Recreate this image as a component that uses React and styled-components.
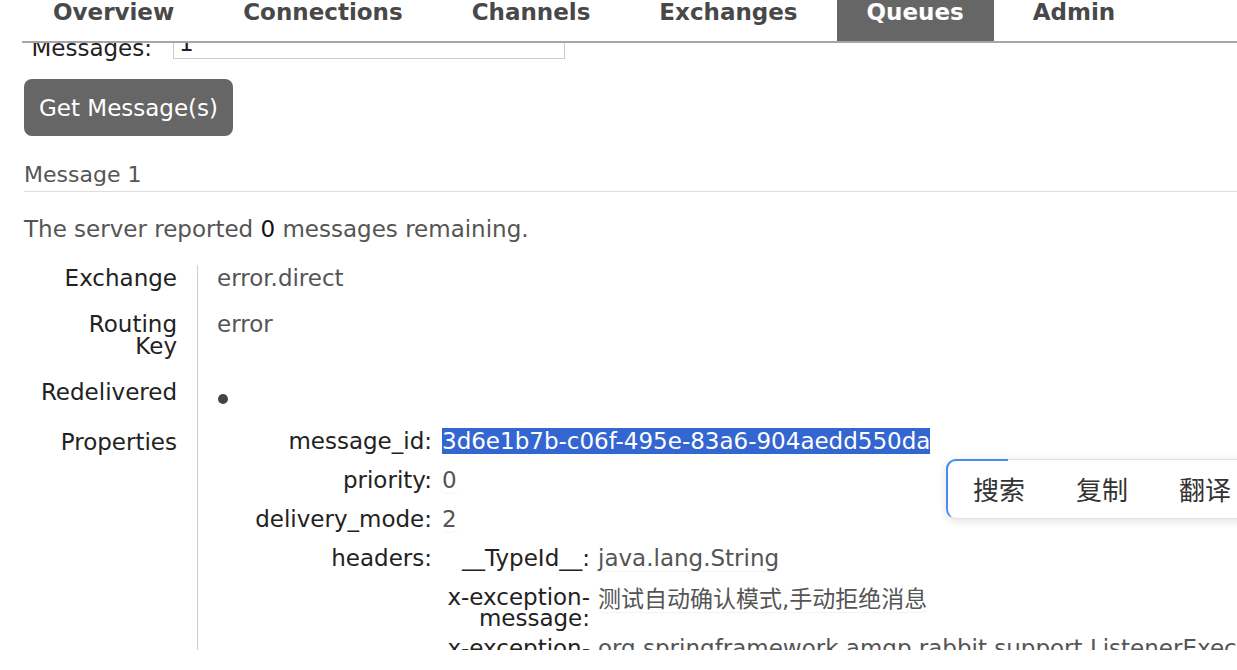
import React from "react";
import styled, {createGlobalStyle} from "styled-components";

const GlobalStyle = createGlobalStyle`
    html, body {
        margin: 0;
        padding: 0;
        background: #FFFFFF;
        overflow: hidden;
    }
    body {
        font-family: "DejaVu Sans", Verdana, "Noto Sans CJK SC", sans-serif;
        font-size: 23px;
        color: #484848;
    }
`;

const Page = styled.div`
    position: relative;
    width: 1237px;
    height: 670px;
    overflow: hidden;
    background: #FFFFFF;
`;

const Nav = styled.ul`
    display: flex;
    height: 41px;
    margin: 0 0 0 22px;
    padding: 0 0 0 1px;
    list-style: none;
    border-bottom: 2px solid #A6A6A6;
`;

const Tab = styled.li`
    padding: 0 30px;
    margin-right: 9px;
    font-weight: bold;
    font-size: 23px;
    line-height: 25px;
    color: ${p => p.$active ? "#FFFFFF" : "#484848"};
    background: ${p => p.$active ? "#666666" : "transparent"};
`;

// viewport of the scrolled page, it stops 20px above the bottom edge
const Main = styled.main`
    height: 607px;
    padding-left: 24px;
    overflow: hidden;
`;

// the page is scrolled, so this row sits partly under the nav
const FormRow = styled.div`
    display: flex;
    align-items: flex-start;
    height: 32px;
    margin-top: -16px;
`;

const FormLabel = styled.label`
    width: 128px;
    padding-top: 8px;
    line-height: 27px;
    text-align: right;
    color: #222222;
`;

const TextInput = styled.input`
    box-sizing: border-box;
    width: 392px;
    height: 32px;
    margin-left: 21px;
    padding: 0 5px;
    border: 1px solid #CCCCCC;
    font: inherit;
    color: #222222;
`;

const GetButton = styled.button`
    display: block;
    height: 57px;
    margin-top: 20px;
    padding: 0 15px;
    border: none;
    border-radius: 8px;
    background: #666666;
    color: #FFFFFF;
    font: inherit;
    font-size: 23px;
`;

const SectionTitle = styled.h2`
    margin: 25px 0 0;
    padding-bottom: 3px;
    font-size: 22px;
    font-weight: normal;
    line-height: 27px;
    color: #555555;
    border-bottom: 1px solid #DDDDDD;
`;

const Summary = styled.p`
    margin: 24px 0 0;
    line-height: 27px;
    color: #555555;

    b {
        font-weight: normal;
        color: #111111;
    }
`;

const DetailTable = styled.table`
    margin-top: 22px;
    border-collapse: collapse;
    border-spacing: 0;
`;

const DetailKey = styled.th`
    width: 137px;
    min-width: 137px;
    padding: 2px 20px 22px 16px;
    border-right: 1px solid #CCCCCC;
    text-align: right;
    vertical-align: top;
    font-weight: normal;
    line-height: 22px;
    color: #222222;
`;

const DetailValue = styled.td`
    padding: 2px 0 22px 19px;
    vertical-align: top;
    line-height: 22px;
    color: #555555;
`;

const Dot = styled.span`
    display: inline-block;
    width: 10px;
    height: 10px;
    margin: 13px 0 0 1px;
    border-radius: 50%;
    background: #444444;
`;

const PropTable = styled.table`
    border-collapse: collapse;
    border-spacing: 0;
`;

const PropKey = styled.th`
    width: ${p => p.$width}px;
    min-width: ${p => p.$width}px;
    padding: 0 ${p => p.$gap}px ${p => p.$rowGap}px 0;
    text-align: right;
    vertical-align: top;
    font-weight: normal;
    line-height: 21px;
    color: #222222;
`;

const PropValue = styled.td`
    padding: 0 0 ${p => p.$rowGap}px 0;
    vertical-align: top;
    line-height: 21px;
    color: #555555;
`;

// long values run off the right edge without widening the tables
const Overflowing = styled.div`
    width: 1px;
    white-space: nowrap;
`;

const ValueBox = styled.span`
    border-radius: 5px;
    box-shadow: 0 1px 1px rgba(0, 0, 0, 0.05);
`;

const Selected = styled.span`
    background: #3366D0;
    color: #FFFFFF;
`;

const Cjk = styled.span`
    font-family: "Noto Sans CJK SC", sans-serif;
`;

const SelectionMenu = styled.div`
    position: absolute;
    top: 459px;
    left: 946px;
    display: flex;
    gap: 51px;
    width: 340px;
    height: 60px;
    box-sizing: border-box;
    padding-left: 25px;
    align-items: center;
    background: #FFFFFF;
    border: 1px solid #E2E2E2;
    border-left: 2px solid #4A8CF5;
    border-radius: 10px;
    box-shadow: 0 2px 10px rgba(0, 0, 0, 0.12);

    &::before {
        content: "";
        position: absolute;
        top: -1px;
        left: -2px;
        width: 60px;
        height: 28px;
        border-top: 2px solid #4A8CF5;
        border-left: 2px solid #4A8CF5;
        border-top-left-radius: 10px;
    }
`;

const MenuItem = styled.span`
    font-family: "Noto Sans CJK SC", sans-serif;
    font-size: 26px;
    line-height: 30px;
    color: #333333;
`;

const tabs = ["Overview", "Connections", "Channels", "Exchanges", "Queues", "Admin"];

const Headers = () => (
    <PropTable>
        <tbody>
        <tr>
            <PropKey $width={148} $gap={8} $rowGap={18}>__TypeId__:</PropKey>
            <PropValue $rowGap={18}><ValueBox>java.lang.String</ValueBox></PropValue>
        </tr>
        <tr>
            <PropKey $width={148} $gap={8} $rowGap={9}>x-exception-message:</PropKey>
            <PropValue $rowGap={9}><ValueBox><Cjk>测试自动确认模式</Cjk>,<Cjk>手动拒绝消息</Cjk></ValueBox></PropValue>
        </tr>
        <tr>
            <PropKey $width={148} $gap={8} $rowGap={18}>x-exception-stacktrace:</PropKey>
            <PropValue $rowGap={18}>
                <Overflowing>org.springframework.amqp.rabbit.support.ListenerExecutionFailedException: Listener threw exception</Overflowing>
            </PropValue>
        </tr>
        </tbody>
    </PropTable>
);

const App = () => {
    return (
        <Page>
            <GlobalStyle/>
            <Nav>
                {tabs.map(t => <Tab key={t} $active={t === "Queues"}>{t}</Tab>)}
            </Nav>
            <Main>
                <FormRow>
                    <FormLabel>Messages:</FormLabel>
                    <TextInput defaultValue="1"/>
                </FormRow>
                <GetButton>Get Message(s)</GetButton>
                <SectionTitle>Message 1</SectionTitle>
                <Summary>The server reported <b>0</b> messages remaining.</Summary>
                <DetailTable>
                    <tbody>
                    <tr>
                        <DetailKey>Exchange</DetailKey>
                        <DetailValue>error.direct</DetailValue>
                    </tr>
                    <tr>
                        <DetailKey>Routing Key</DetailKey>
                        <DetailValue>error</DetailValue>
                    </tr>
                    <tr>
                        <DetailKey>Redelivered</DetailKey>
                        <DetailValue><Dot/></DetailValue>
                    </tr>
                    <tr>
                        <DetailKey>Properties</DetailKey>
                        <DetailValue>
                            <PropTable>
                                <tbody>
                                <tr>
                                    <PropKey $width={215} $gap={10} $rowGap={18}>message_id:</PropKey>
                                    <PropValue $rowGap={18}><Selected>3d6e1b7b-c06f-495e-83a6-904aedd550da</Selected></PropValue>
                                </tr>
                                <tr>
                                    <PropKey $width={215} $gap={10} $rowGap={18}>priority:</PropKey>
                                    <PropValue $rowGap={18}><ValueBox>0</ValueBox></PropValue>
                                </tr>
                                <tr>
                                    <PropKey $width={215} $gap={10} $rowGap={18}>delivery_mode:</PropKey>
                                    <PropValue $rowGap={18}><ValueBox>2</ValueBox></PropValue>
                                </tr>
                                <tr>
                                    <PropKey $width={215} $gap={10} $rowGap={18}>headers:</PropKey>
                                    <PropValue $rowGap={18}><Headers/></PropValue>
                                </tr>
                                </tbody>
                            </PropTable>
                        </DetailValue>
                    </tr>
                    </tbody>
                </DetailTable>
            </Main>
            <SelectionMenu>
                <MenuItem>搜索</MenuItem>
                <MenuItem>复制</MenuItem>
                <MenuItem>翻译</MenuItem>
            </SelectionMenu>
        </Page>
    );
};

export default App;
